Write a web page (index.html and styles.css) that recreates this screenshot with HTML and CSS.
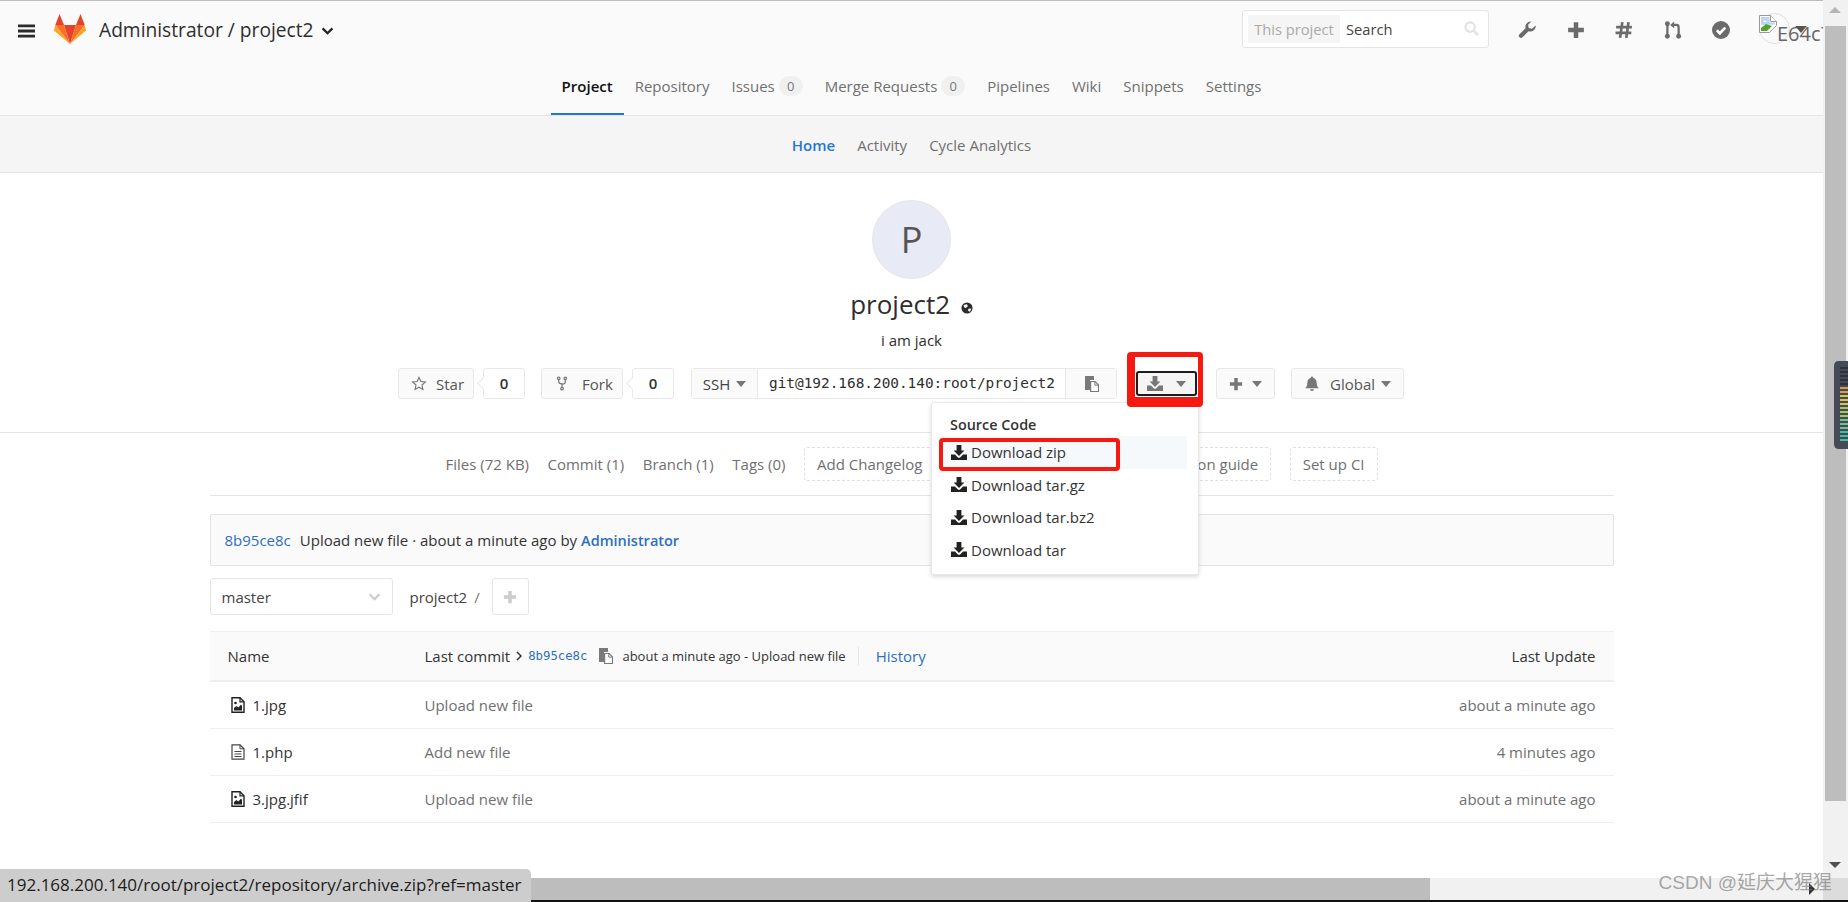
FILE: index.html
```html
<!DOCTYPE html>
<html lang="en">
<head>
<meta charset="utf-8">
<title>project2</title>
<link rel="stylesheet" href="styles.css">
</head>
<body>
<svg class="defs" width="0" height="0" aria-hidden="true">
  <symbol id="i-dl" viewBox="0 0 16 15"><path d="M5.600 0h4.800v5.600h3L8 11 2.600 5.600h3z"/><path d="M0 9.500h4l2.400 2.500a2.200 2.200 0 0 0 3.200 0L12 9.500h4V15H0z"/></symbol>
  <symbol id="i-clip" viewBox="0 0 16 16"><path d="M2 0h9v4H7v10H2z" fill="#7a7a7a"/><path d="M7.600 5.500h4.500l3.400 3.400v6.600H7.600z" fill="#fff" stroke="#7a7a7a" stroke-width="1.200"/><path d="M11.800 5.500v3.600h3.600" fill="none" stroke="#7a7a7a"/></symbol>
  <symbol id="i-img" viewBox="0 0 14 16"><path d="M1 .8h8l4 4v10.400H1z" fill="#fff" stroke="#222" stroke-width="1.400"/><path d="M9 .8v4h4" fill="none" stroke="#222" stroke-width="1.200"/><path d="M3 13.500V11l2.500-2 1.800 1.500L10 7.500l1 1.500v4.500z" fill="#222"/><circle cx="4.500" cy="6" r="1.300" fill="#222"/></symbol>
  <symbol id="i-txt" viewBox="0 0 14 16"><path d="M1 .8h8l4 4v10.400H1z" fill="#fff" stroke="#444" stroke-width="1.200"/><path d="M9 .8v4h4M3.500 7.500h7M3.500 10h7M3.500 12.500h7" fill="none" stroke="#444"/></symbol>
  <symbol id="i-caret" viewBox="0 0 10 6"><path d="M0 0h10L5 6z"/></symbol>
</svg>

<div class="window">
  <div class="viewport">
    <main class="page">
      <header class="site-head">
        <div class="head-row">
          <svg class="burger" viewBox="0 0 18 14"><path d="M0 0h18v3H0zM0 5.500h18v3H0zM0 11h18v3H0z" fill="#2b2b2b"/></svg>
          <svg class="logo" viewBox="0 0 32 30">
            <path d="M5.500 0 10 11H1.300z" fill="#e24329"/>
            <path d="M26.500 0 22 11h8.700z" fill="#e24329"/>
            <path d="M16 30 10 11h12z" fill="#e24329"/>
            <path d="M16 30 10 11H1.300z" fill="#fc6d26"/>
            <path d="M16 30l6-19h8.700z" fill="#fc6d26"/>
            <path d="M1.300 11 0 16.500 16 30z" fill="#fca326"/>
            <path d="M30.700 11 32 16.500 16 30z" fill="#fca326"/>
          </svg>
          <span class="crumb">Administrator / project2</span>
          <svg class="chev" viewBox="0 0 14 9"><path d="M1.500 1.500 7 7l5.500-5.500" fill="none" stroke="#222" stroke-width="2.600"/></svg>
          <div class="search">
            <span class="scope">This project</span>
            <span class="search-label">Search</span>
            <svg class="mag" viewBox="0 0 16 16"><circle cx="6.500" cy="6.500" r="5" fill="none" stroke="#e3e3e3" stroke-width="2.400"/><path d="M10.500 10.500 15 15" stroke="#e3e3e3" stroke-width="2.800"/></svg>
          </div>
          <div class="head-icons">
            <svg class="hi" viewBox="0 0 16 16"><path fill="#6b6b6b" d="M15.700 3.900a4.800 4.800 0 0 1-6.300 5.200L4 14.500a1.900 1.900 0 0 1-2.700-2.700L6.700 6.400A4.800 4.800 0 0 1 11.900.5L9 3.400l.5 2.900 2.900.5z"/></svg>
            <svg class="hi" viewBox="0 0 16 16"><path fill="#6b6b6b" d="M6 1h4v5h5v4h-5v5H6v-5H1V6h5z"/></svg>
            <svg class="hi" viewBox="0 0 16 16"><path d="M6.500 1 4.500 15M12 1l-2 14M1 5.500h14M.5 10.500h14" stroke="#6b6b6b" stroke-width="2.400" fill="none"/></svg>
            <svg class="hi" viewBox="0 0 16 16"><g fill="#6b6b6b"><circle cx="3" cy="2.500" r="2.200"/><circle cx="3" cy="13.500" r="2.200"/><circle cx="13" cy="13.500" r="2.200"/><path d="M5.500 3.500 9 .5v6z"/></g><path d="M3 3v10M13 13V5.500Q13 3.500 11 3.500H8" fill="none" stroke="#6b6b6b" stroke-width="2"/></svg>
            <svg class="hi" viewBox="0 0 16 16"><circle cx="8" cy="8" r="8" fill="#6b6b6b"/><path d="M4.300 8.200 7 10.900l4.800-5" fill="none" stroke="#fff" stroke-width="2.400"/></svg>
          </div>
          <div class="user">
            <span class="user-ring"></span>
            <svg class="broken" viewBox="0 0 18 18"><path d="M.5.500h11l6 6v4l-7 7H.5z" fill="#fff" stroke="#999"/><path d="M2 2h8.500v5.500H16v2L2 10z" fill="#bcd3f5"/><path d="M4 7a2 1.500 0 0 1 4 0z" fill="#fff"/><path d="M2 16v-3l5-4 6 2-5 5z" fill="#56a22e"/><path d="M11.500.5v6h6" fill="#fff" stroke="#999"/></svg>
            <span class="alt">E64c7</span>
            <svg class="user-caret" viewBox="0 0 10 6"><use href="#i-caret" fill="#555"/></svg>
          </div>
        </div>
        <nav class="tabs">
          <a class="tab active">Project</a>
          <a class="tab">Repository</a>
          <a class="tab">Issues <span class="badge">0</span></a>
          <a class="tab">Merge Requests <span class="badge">0</span></a>
          <a class="tab">Pipelines</a>
          <a class="tab">Wiki</a>
          <a class="tab">Snippets</a>
          <a class="tab">Settings</a>
        </nav>
      </header>

      <nav class="subnav">
        <a class="sub active">Home</a>
        <a class="sub">Activity</a>
        <a class="sub">Cycle Analytics</a>
      </nav>

      <section class="hero">
        <div class="avatar">P</div>
        <h1 class="pname">project2 <svg class="globe" viewBox="0 0 14 14"><circle cx="7" cy="7" r="6.500" fill="#2b2b2b"/><path d="M3 3.500 7 2.500 8 5 5.500 7 3.500 6zM8.500 8l3.500-.5-1.500 4-2-1z" fill="#fff"/></svg></h1>
        <p class="pdesc">i am jack</p>
        <div class="controls">
          <a class="btn w-star"><svg class="ic" viewBox="0 0 16 16"><path d="M8 1.500l2 4.400 4.800.5-3.600 3.200 1 4.700L8 11.900l-4.200 2.400 1-4.700L1.200 6.400 6 5.900z" fill="none" stroke="#777" stroke-width="1.200"/></svg>Star</a>
          <span class="count">0</span>
          <a class="btn w-fork"><svg class="ic ic-fork" viewBox="0 0 16 16"><g fill="none" stroke="#777" stroke-width="1.300"><circle cx="4.500" cy="2.500" r="1.400"/><circle cx="11.500" cy="2.500" r="1.400"/><circle cx="8" cy="13.500" r="1.400"/><path d="M4.500 4v2Q4.500 8 8 8.500T11.500 6V4M8 8.500V12"/></g></svg>Fork</a>
          <span class="count">0</span>
          <div class="clone">
            <a class="clone-proto">SSH <svg class="caret" viewBox="0 0 10 6"><use href="#i-caret" fill="#777"/></svg></a>
            <span class="clone-url">git@192.168.200.140:root/project2</span>
            <a class="clone-copy"><svg class="clip" viewBox="0 0 16 16"><use href="#i-clip"/></svg></a>
          </div>
          <div class="dl-wrap">
            <a class="dl-btn"><svg class="dl-ic" viewBox="0 0 16 15"><use href="#i-dl" fill="#777"/></svg><svg class="caret" viewBox="0 0 10 6"><use href="#i-caret" fill="#777"/></svg></a>
            <div class="menu">
              <div class="menu-head">Source Code</div>
              <a class="menu-item hover"><svg class="dl-ic" viewBox="0 0 16 15"><use href="#i-dl" fill="#222"/></svg>Download zip<span class="mark mark-item"></span></a>
              <a class="menu-item"><svg class="dl-ic" viewBox="0 0 16 15"><use href="#i-dl" fill="#222"/></svg>Download tar.gz</a>
              <a class="menu-item"><svg class="dl-ic" viewBox="0 0 16 15"><use href="#i-dl" fill="#222"/></svg>Download tar.bz2</a>
              <a class="menu-item"><svg class="dl-ic" viewBox="0 0 16 15"><use href="#i-dl" fill="#222"/></svg>Download tar</a>
            </div>
            <span class="mark mark-btn"></span>
          </div>
          <a class="btn w-plus"><svg class="plus-ic" viewBox="0 0 16 16"><path fill="#777" d="M6 1h4v5h5v4h-5v5H6v-5H1V6h5z"/></svg><svg class="caret" viewBox="0 0 10 6"><use href="#i-caret" fill="#777"/></svg></a>
          <a class="btn w-bell"><svg class="ic ic-bell" viewBox="0 0 16 16"><path fill="#777" d="M8 .5a1.200 1.200 0 0 1 1.200 1.300C11.500 2.400 13 4.500 13 7c0 3.500 1 5 2.200 6H.8C2 12 3 10.500 3 7c0-2.500 1.500-4.600 3.800-5.200A1.200 1.200 0 0 1 8 .5zM6 14h4a2 2 0 0 1-4 0z"/></svg>Global <svg class="caret" viewBox="0 0 10 6"><use href="#i-caret" fill="#777"/></svg></a>
        </div>
      </section>

      <div class="container">
        <nav class="stats">
          <a>Files (72 KB)</a>
          <a>Commit (1)</a>
          <a>Branch (1)</a>
          <a>Tags (0)</a>
          <a class="dash">Add Changelog</a>
          <a class="dash">Add License</a>
          <a class="dash">Add Contribution guide</a>
          <a class="dash">Set up CI</a>
        </nav>
        <div class="commit">
          <a class="link sha">8b95ce8c</a>
          <span>Upload new file · about a minute ago by</span>
          <a class="link author">Administrator</a>
        </div>
        <div class="tree-ctrl">
          <div class="branch">master <svg class="branch-chev" viewBox="0 0 14 9"><path d="M1.500 1.500 7 7l5.500-5.500" fill="none" stroke="#ccc" stroke-width="2.400"/></svg></div>
          <span class="path">project2</span>
          <span class="slash">/</span>
          <a class="addfile"><svg viewBox="0 0 16 16"><path fill="#ccc" d="M6 1h4v5h5v4h-5v5H6v-5H1V6h5z"/></svg></a>
        </div>
        <div class="tree">
          <div class="tree-head">
            <span class="c-name">Name</span>
            <span class="c-last">
              <span>Last commit</span>
              <svg class="gt" viewBox="0 0 6 10"><path d="M1 1l4 4-4 4" fill="none" stroke="#333" stroke-width="1.500"/></svg>
              <a class="link mono">8b95ce8c</a>
              <svg class="clip-s" viewBox="0 0 16 16"><use href="#i-clip"/></svg>
              <span class="small">about a minute ago - Upload new file</span>
              <span class="vr"></span>
              <a class="hist">History</a>
            </span>
            <span class="c-time strong">Last Update</span>
          </div>
          <div class="tree-row">
            <span class="c-name"><svg class="file" viewBox="0 0 14 16"><use href="#i-img"/></svg>1.jpg</span>
            <span class="c-last muted">Upload new file</span>
            <span class="c-time muted">about a minute ago</span>
          </div>
          <div class="tree-row">
            <span class="c-name"><svg class="file" viewBox="0 0 14 16"><use href="#i-txt"/></svg>1.php</span>
            <span class="c-last muted">Add new file</span>
            <span class="c-time muted">4 minutes ago</span>
          </div>
          <div class="tree-row">
            <span class="c-name"><svg class="file" viewBox="0 0 14 16"><use href="#i-img"/></svg>3.jpg.jfif</span>
            <span class="c-last muted">Upload new file</span>
            <span class="c-time muted">about a minute ago</span>
          </div>
        </div>
      </div>
    </main>
    <div class="vbar">
      <svg class="arrow" viewBox="0 0 12 6"><path d="M0 6h12L6 0z" fill="#b5b5b5"/></svg>
      <div class="vthumb"></div>
      <svg class="arrow arrow-down" viewBox="0 0 12 6"><path d="M0 0h12L6 6z" fill="#505050"/></svg>
    </div>
  </div>
  <div class="hbar">
    <div class="hthumb"></div>
    <svg class="harrow" viewBox="0 0 6 12"><path d="M0 0v12l6-6z" fill="#333"/></svg>
    <div class="hcorner"></div>
  </div>
  <div class="edge"></div>

  <div class="status">192.168.200.140/root/project2/repository/archive.zip?ref=master</div>
  <div class="watermark">CSDN @延庆大猩猩</div>
  <svg class="meter" viewBox="0 0 14 88">
    <path d="M14 0H5Q0 0 0 5v78q0 5 5 5h9z" fill="#454a57"/>
    <g fill="#2e323c"><rect x="6" y="6" width="8" height="2"/><rect x="6" y="10" width="8" height="2"/><rect x="6" y="14" width="8" height="2"/><rect x="6" y="18" width="8" height="2"/><rect x="6" y="22" width="8" height="2"/></g>
    <g fill="#e09a45"><rect x="6" y="26" width="8" height="2"/><rect x="6" y="30" width="8" height="2"/></g>
    <g fill="#d8c24e"><rect x="6" y="34" width="8" height="2"/><rect x="6" y="38" width="8" height="2"/><rect x="6" y="42" width="8" height="2"/></g>
    <g fill="#a3c65c"><rect x="6" y="46" width="8" height="2"/><rect x="6" y="50" width="8" height="2"/><rect x="6" y="54" width="8" height="2"/></g>
    <g fill="#6cc48a"><rect x="6" y="58" width="8" height="2"/><rect x="6" y="62" width="8" height="2"/><rect x="6" y="66" width="8" height="2"/></g>
    <g fill="#3fbf9f"><rect x="6" y="70" width="8" height="2"/><rect x="6" y="74" width="8" height="2"/><rect x="6" y="78" width="8" height="2"/></g>
  </svg>
</div>
</body>
</html>
```

FILE: styles.css
```css
* { box-sizing: border-box; }
html, body { margin: 0; height: 100%; overflow: hidden; }
body { font-family: "Open Sans", "Noto Sans", sans-serif; font-size: 15px; color: #2e2e2e; background: #fff; }
a { color: inherit; text-decoration: none; }
.defs { position: absolute; }

.window { position: relative; width: 1848px; height: 902px; display: flex; flex-direction: column; overflow: hidden; }
.viewport { flex: 1; min-height: 0; display: flex; }
.page { flex: 1; min-width: 0; overflow: hidden; }

.site-head { background: #fafafa; border-top: 1px solid #bdbdbd; border-bottom: 1px solid #e5e5e5; height: 116px; }
.head-row { height: 55px; display: flex; align-items: center; position: relative; }
.burger { width: 17px; height: 14px; margin: 5px 0 0 18px; }
.logo { width: 32px; height: 30px; margin: 0 0 0 19px; }
.crumb { font-size: 19.200px; margin: 2px 0 0 13px; color: #2e2e2e; }
.chev { width: 13px; height: 8px; margin: 4px 0 0 7px; }
.search { margin-left: auto; width: 247px; height: 38px; background: #fff; border: 1px solid #e5e5e5; border-radius: 3px; display: flex; align-items: center; padding: 0 9px 0 5px; }
.scope { background: #f5f5f5; color: #aaa; height: 28px; width: 92px; line-height: 28px; text-align: center; border-radius: 2px; font-size: 14.700px; white-space: nowrap; }
.search-label { margin-left: 6px; color: #444; font-size: 14.700px; }
.mag { width: 15px; height: 15px; margin-left: auto; }
.head-icons { display: flex; gap: 30.500px; margin: 2px 0 0 29px; }
.hi { width: 18px; height: 18px; display: block; }
.user { position: relative; width: 64px; height: 40px; margin-left: 29px; overflow: hidden; flex: none; }
.user-ring { position: absolute; left: 0; top: 4px; width: 31px; height: 31px; border: 1px solid #e0e0e0; border-radius: 50%; }
.broken { position: absolute; left: 0; top: 6px; width: 18px; height: 18px; }
.alt { position: absolute; left: 18px; top: 11px; font-size: 20px; line-height: 27px; color: #666; }
.user-caret { position: absolute; left: 36px; top: 17px; width: 12px; height: 7px; }

.tabs { height: 59px; display: flex; justify-content: center; }
.tab { height: 59px; line-height: 60px; padding: 0 11px; color: #707070; white-space: nowrap; }
.tab.active { color: #111; font-weight: 600; border-bottom: 2px solid #1f78d1; }
.badge { display: inline-block; min-width: 24px; height: 20px; line-height: 20px; text-align: center; border-radius: 10px; background: #f0f0f0; font-size: 13px; color: #777; vertical-align: 1px; }

.subnav { height: 57px; background: #f5f5f5; border-bottom: 1px solid #e5e5e5; display: flex; justify-content: center; gap: 22px; line-height: 58px; color: #707070; }
.sub.active { color: #1f78d1; font-weight: 600; }

.hero { height: 260px; border-bottom: 1px solid #e5e5e5; padding-top: 27px; display: flex; flex-direction: column; align-items: center; }
.avatar { width: 79px; height: 79px; border-radius: 50%; background: #e8eaf5; border: 1px solid #e5e5e5; color: #555; font-size: 36px; line-height: 77px; text-align: center; }
.pname { margin: 7px 0 0; font-size: 26px; font-weight: 400; line-height: 36px; color: #2e2e2e; }
.globe { width: 12px; height: 12px; margin-left: 4px; }
.pdesc { margin: 7px 0 0; line-height: 22px; color: #2e2e2e; }
.controls { margin-top: 17px; height: 31px; display: flex; align-items: center; padding-right: 21px; }
.btn { height: 31px; display: flex; align-items: center; background: #fafafa; border: 1px solid #e8e8e8; border-radius: 3px; color: #555; padding-left: 12px; white-space: nowrap; }
.ic { width: 16px; height: 15px; margin-right: 9px; flex: none; }
.ic-fork { margin-right: 12px; }
.ic-bell { margin-right: 10px; }
.w-star { width: 76px; }
.w-fork { width: 82px; margin-left: 16px; }
.w-plus { width: 59px; margin-left: 19px; }
.w-bell { width: 113px; margin-left: 16px; }
.w-bell .caret { margin-left: 6px; }
.plus-ic { width: 14px; height: 14px; margin-right: 9px; }
.count { position: relative; width: 42px; height: 31px; margin-left: 9px; line-height: 29px; text-align: center; font-weight: 600; border: 1px solid #e8e8e8; border-radius: 3px; background: #fff; color: #333; }
.count::before { content: ""; position: absolute; left: -5px; top: 10px; width: 8px; height: 8px; background: #fff; border-left: 1px solid #e8e8e8; border-bottom: 1px solid #e8e8e8; transform: rotate(45deg); }
.caret { width: 10px; height: 6px; flex: none; }
.clone { display: flex; height: 31px; margin-left: 17px; border: 1px solid #e8e8e8; border-radius: 3px; }
.clone-proto { width: 66px; background: #fafafa; border-right: 1px solid #e8e8e8; display: flex; align-items: center; justify-content: center; gap: 6px; color: #444; }
.clone-url { width: 307px; padding-left: 11px; line-height: 29px; font-family: "DejaVu Sans Mono", "Liberation Mono", monospace; font-size: 14.400px; color: #2e2e2e; white-space: nowrap; }
.clone-copy { width: 51px; background: #fafafa; border-left: 1px solid #e8e8e8; display: flex; align-items: center; justify-content: center; }
.clip { width: 16px; height: 16px; }
.dl-wrap { position: relative; margin-left: 19px; }
.dl-btn { width: 61px; height: 25px; display: flex; align-items: center; gap: 13px; padding-left: 9px; background: #f5f5f5; border: 2px solid #1c1c1c; border-radius: 3px; }
.dl-ic { width: 16px; height: 15px; flex: none; }
.mark { position: absolute; border: 4px solid #f5190f; border-radius: 4px; pointer-events: none; }
.mark-btn { left: -9px; top: -19px; width: 76px; height: 55px; border-width: 5px 5px 10px 8px; z-index: 4; }
.menu { position: absolute; left: -205px; top: 31px; width: 268px; height: 173px; background: #fff; border: 1px solid #e8e8e8; border-radius: 3px; box-shadow: 0 2px 4px rgba(0,0,0,.15); padding: 0 11px; z-index: 3; }
.menu-head { height: 33px; padding: 12px 0 0 7px; line-height: 20px; font-size: 14.400px; font-weight: 600; color: #333; }
.menu-item { position: relative; display: flex; align-items: center; gap: 4px; height: 32.500px; padding-left: 8px; color: #333; white-space: nowrap; }
.menu-item.hover { background: #f6f9fc; }
.mark-item { left: -4px; top: 2px; width: 181px; height: 33px; }

.container { width: 1404px; margin: 0 auto; }
.stats { height: 63px; border-bottom: 1px solid #e5e5e5; padding-top: 14px; display: flex; justify-content: center; align-items: flex-start; gap: 18.500px; color: #707070; }
.stats a { line-height: 34px; white-space: nowrap; }
.stats .dash { border: 1px dashed #e0e0e0; border-radius: 3px; padding: 0 12px; height: 34px; line-height: 32px; }
.commit { margin-top: 18px; height: 52px; background: #fafafa; border: 1px solid #e5e5e5; border-radius: 2px; display: flex; align-items: center; padding-left: 14px; gap: 9px; color: #333; }
.link { color: #2e6fbf; }
.author { font-weight: 600; font-size: 14.500px; margin-left: -5px; }
.tree-ctrl { margin-top: 12px; height: 37px; display: flex; align-items: center; }
.branch { width: 183px; height: 37px; border: 1px solid #e5e5e5; border-radius: 3px; padding: 0 11px; display: flex; align-items: center; justify-content: space-between; color: #444; }
.branch-chev { width: 13px; height: 8px; }
.path { margin-left: 17px; color: #444; }
.slash { margin-left: 7px; color: #777; }
.addfile { margin-left: 12px; width: 37px; height: 37px; border: 1px solid #e5e5e5; border-radius: 3px; display: flex; align-items: center; justify-content: center; }
.addfile svg { width: 14px; height: 14px; }
.tree { margin-top: 16px; }
.tree-head { height: 51px; background: #fafafa; border-top: 1px solid #eee; border-bottom: 2px solid #eee; display: flex; align-items: center; color: #333; }
.tree-row { height: 47px; border-bottom: 1px solid #eee; display: flex; align-items: center; }
.c-name { width: 215px; padding-left: 18px; display: flex; align-items: center; color: #333; flex: none; }
.c-last { flex: 1; display: flex; align-items: center; white-space: nowrap; }
.c-time { padding-right: 18px; white-space: nowrap; }
.strong { color: #333; }
.muted { color: #707070; }
.file { width: 14px; height: 16px; margin: 0 8px 0 3px; }
.gt { width: 6px; height: 10px; margin: 0 6px; }
.mono { font-family: "DejaVu Sans Mono", "Liberation Mono", monospace; font-size: 12.300px; }
.clip-s { width: 16px; height: 16px; margin: 0 9px 0 10px; }
.small { font-size: 13px; color: #333; white-space: nowrap; }
.vr { width: 1px; height: 18px; background: #e5e5e5; margin: 0 17px 0 12px; }
.hist { color: #2e6fbf; }

.vbar { width: 25px; flex: none; background: #f1f1f1; position: relative; }
.arrow { position: absolute; left: 6px; top: 7px; width: 12px; height: 6px; }
.arrow-down { top: 862px; }
.vthumb { position: absolute; left: 2px; top: 26px; width: 21px; height: 775px; background: #bdbdbd; }

.hbar { height: 22px; flex: none; background: #f1f1f1; display: flex; align-items: center; position: relative; }
.hthumb { width: 1430px; height: 22px; background: #bdbdbd; }
.harrow { margin-left: auto; margin-right: 8px; width: 6px; height: 12px; }
.hcorner { width: 25px; height: 22px; background: #dcdcdc; }
.edge { height: 2px; flex: none; background: #111; }

.status { position: absolute; left: 0; bottom: 0; width: 531px; height: 33px; background: #cdcdcd; border-top-right-radius: 5px; padding-left: 7px; font-size: 17px; line-height: 32px; color: #1c1c1c; white-space: nowrap; }
.watermark { position: absolute; right: 16px; bottom: 6px; font-family: "Liberation Sans", "Noto Sans CJK SC", sans-serif; font-size: 19px; line-height: 26px; color: rgba(120,120,120,.65); white-space: nowrap; }
.meter { position: absolute; left: 1834px; top: 361px; width: 14px; height: 88px; }
```
